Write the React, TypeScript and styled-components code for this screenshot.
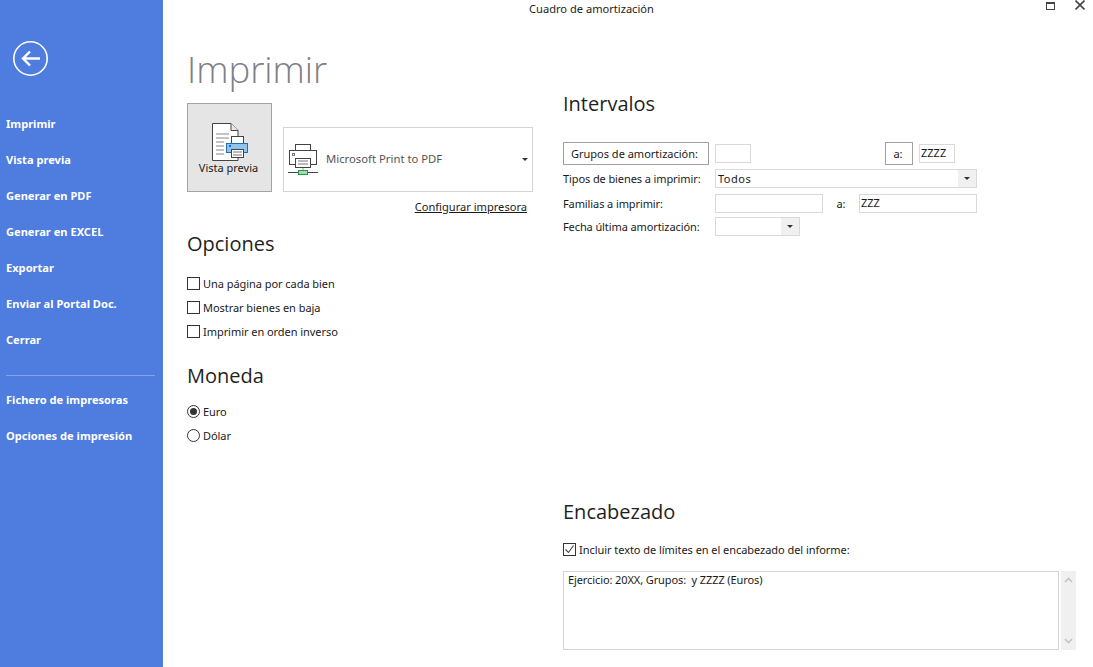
import React from "react";
import styled, { createGlobalStyle } from "styled-components";

const Global = createGlobalStyle`
  html, body { margin: 0; padding: 0; background: #fff; }
  body { font-family: "Noto Sans", "Open Sans", "Liberation Sans", sans-serif; color: #1a1a1a; }
  #root { width: 1093px; height: 667px; overflow: hidden; }
`;

const Page = styled.div`display: flex; width: 1093px; height: 667px; overflow: hidden;`;
const Side = styled.nav`width: 163px; flex: none; background: #4e7cdf; display: flex; flex-direction: column; padding: 41px 0 0 6px; box-sizing: border-box;`;
const BackIcon = styled.svg`display: block; margin: 0 0 29px 7px; flex: none;`;
const NavItem = styled.div`height: 36px; line-height: 36px; font-size: 11.1px; font-weight: 700; color: #fff; white-space: nowrap;`;
const NavRule = styled.div`width: 149px; height: 1px; background: #84a3e8; margin: 17px 0 6px 0;`;

const Main = styled.main`flex: 1; display: flex; flex-direction: column; min-width: 0;`;
const TitleBar = styled.header`height: 18px; flex: none; position: relative; text-align: center; font-size: 11.1px; line-height: 18px; color: #222; padding-right: 73px;`;
const WinIcons = styled.div`position: absolute; right: 8px; top: 0; display: flex; gap: 20px; align-items: center; height: 10px;`;

const Body = styled.div`display: flex; padding-left: 24px; flex: 1;`;
const Left = styled.section`width: 346px; flex: none; display: flex; flex-direction: column;`;
const Right = styled.section`width: 513px; margin-left: 30px; flex: none; display: flex; flex-direction: column; padding-top: 73px;`;

const BigTitle = styled.h1`margin: 0 0 11px; font-family: "Open Sans", sans-serif; font-weight: 300; font-size: 36.5px; line-height: 46px; height: 46px; padding-top: 28px; color: #7f7f84;`;
const PrintRow = styled.div`display: flex; align-items: flex-end; gap: 11px;`;
const Preview = styled.button`width: 85px; height: 89px; box-sizing: border-box; background: #e5e5e5; border: 1px solid #a3a3a3; padding: 19px 2px 0 0; display: flex; flex-direction: column; align-items: center; font: inherit; font-size: 11px; letter-spacing: 0; color: #1a1a1a; line-height: 14px;`;
const PreviewSvg = styled.svg`display: block; margin: 0 -2px -1px 0; flex: none;`;
const PrinterBox = styled.div`width: 250px; height: 65px; box-sizing: border-box; border: 1px solid #d4d4d4; display: flex; align-items: center; padding-left: 4px; position: relative; font-size: 11.3px; color: #555;`;
const PrinterName = styled.span`margin: -2px 0 0 7px;`;
const Caret = styled.span`width: 0; height: 0; border-left: 3px solid transparent; border-right: 3px solid transparent; border-top: 3px solid #333; display: block;`;
const PrinterCaret = styled(Caret)`position: absolute; right: 4px; top: 30px;`;
const ConfigLink = styled.a`align-self: flex-end; margin: 8px 6px 0 0; font-size: 11.1px; line-height: 14px; color: #1a1a1a; text-decoration: underline;`;

const Heading = styled.h2`margin: 0; font-family: "Open Sans", sans-serif; font-weight: 400; font-size: 20px; line-height: 26px; color: #1f1f1f;`;
const OptionsHead = styled(Heading)`margin-top: 17px; margin-bottom: 14px;`;
const MoneyHead = styled(Heading)`margin-top: 20px; margin-bottom: 10px;`;
const OptList = styled.div`display: flex; flex-direction: column;`;
const Opt = styled.label`height: 24px; display: flex; align-items: center; gap: 3px; font-size: 11px; letter-spacing: -.05px; color: #1a1a1a; white-space: nowrap;`;
const Box = styled.span`width: 13px; height: 13px; box-sizing: border-box; border: 1px solid #333; flex: none; display: flex; align-items: center; justify-content: center;`;
const Radio = styled.span`width: 13px; height: 13px; box-sizing: border-box; border: 1px solid #333; border-radius: 50%; flex: none; display: flex; align-items: center; justify-content: center;`;
const Dot = styled.span`width: 7px; height: 7px; background: #333; border-radius: 50%;`;

const IntervalHead = styled(Heading)`margin-bottom: 25px;`;
const Row = styled.div<{ $h: number }>`display: flex; align-items: center; height: ${p => p.$h}px; font-size: 11px; white-space: nowrap;`;
const LabelBtn = styled.div<{ $w: number; $ml?: number; $pr?: number }>`width: ${p => p.$w}px; height: 23px; margin-left: ${p => p.$ml || 0}px; padding-right: ${p => p.$pr || 0}px; box-sizing: border-box; border: 1px solid #a0a0a0; display: flex; align-items: center; justify-content: center; flex: none;`;
const Label = styled.span`width: 152px; flex: none; letter-spacing: -.1px;`;
const Field = styled.div<{ $w: number; $ml?: number }>`width: ${p => p.$w}px; height: 19px; margin-left: ${p => p.$ml || 0}px; box-sizing: border-box; border: 1px solid #d9d9d9; padding: 0 1px; line-height: 15px; flex: none; font-size: 11px;`;
const Select = styled.div<{ $w: number }>`width: ${p => p.$w}px; height: 19px; box-sizing: border-box; border: 1px solid #d9d9d9; display: flex; align-items: center; justify-content: space-between; padding-left: 2px; flex: none; letter-spacing: .5px;`;
const SelectBtn = styled.span`width: 18px; height: 100%; background: #f0f0f0; display: flex; align-items: center; justify-content: center;`;
const ToLabel = styled.span<{ $w: number }>`width: ${p => p.$w}px; flex: none; text-align: center;`;

const EncHead = styled(Heading)`margin-top: 261px; margin-bottom: 16px;`;
const CheckRow = styled(Opt)`height: 16px;`;
const AreaRow = styled.div`display: flex; margin-top: 14px; gap: 2px;`;
const Area = styled.div`width: 496px; height: 79px; box-sizing: border-box; border: 1px solid #d4d4d4; padding: 1px 4px; font-size: 11px; letter-spacing: -.1px; line-height: 14px; white-space: pre;`;
const Scroll = styled.div`width: 15px; height: 79px; background: #f0f0f0; display: flex; flex-direction: column; justify-content: space-between; align-items: center; padding: 6px 0; box-sizing: border-box;`;

const navTop = ["Imprimir", "Vista previa", "Generar en PDF", "Generar en EXCEL", "Exportar", "Enviar al Portal Doc.", "Cerrar"];
const navBottom = ["Fichero de impresoras", "Opciones de impresión"];

const PreviewIcon = () => (
  <PreviewSvg width="36" height="39" viewBox="0 0 36 39" fill="none">
    <path d="M.5 .5H19L26 7.5V37.5H.5Z" fill="#fff" stroke="#444" />
    <path d="M19 .5V7.5H26" fill="#e8e8e8" stroke="#444" />
    <path d="M4 11h13M4 15h13M4 19h8M4 23h8M4 27h8M4 31h8" stroke="#888" />
    <rect x="19.5" y="13.5" width="12" height="8" fill="#fff" stroke="#444" />
    <rect x="14.5" y="20.5" width="21" height="9" fill="#8fc4ee" stroke="#1f6db4" />
    <rect x="17" y="22" width="2" height="2" fill="#1f6db4" />
    <rect x="19.5" y="26.5" width="12" height="8" fill="#fff" stroke="#444" />
    <path d="M21 29h9M21 32h9" stroke="#777" />
  </PreviewSvg>
);

const PrinterIcon = () => (
  <svg width="31" height="31" viewBox="0 0 31 31" fill="none">
    <rect x="7.5" y=".5" width="15" height="6" fill="#fff" stroke="#444" />
    <rect x="1.5" y="6.5" width="27" height="14" fill="#fff" stroke="#444" />
    <rect x="4.5" y="9.5" width="2" height="2" stroke="#777" />
    <rect x="7.5" y="14.5" width="15" height="9" fill="#fff" stroke="#444" />
    <path d="M10 17h10M10 20h10" stroke="#777" />
    <path d="M15 24v3" stroke="#999" />
    <path d="M0 28.5h30" stroke="#444" />
    <rect x="10.5" y="26.5" width="9" height="4" fill="#a8d8b0" stroke="#1f9a4a" />
  </svg>
);

export default function App() {
  return (
    <Page>
      <Global />
      <Side>
        <BackIcon width="36" height="36" viewBox="0 0 36 36" fill="none">
          <circle cx="17.5" cy="17.5" r="16.7" stroke="#fff" strokeWidth="1.6" />
          <path d="M27 17.5H10M17 10.5l-7 7 7 7" stroke="#fff" strokeWidth="2.4" />
        </BackIcon>
        {navTop.map(t => <NavItem key={t}>{t}</NavItem>)}
        <NavRule />
        {navBottom.map(t => <NavItem key={t}>{t}</NavItem>)}
      </Side>
      <Main>
        <TitleBar>
          Cuadro de amortización
          <WinIcons>
            <svg width="9" height="9" viewBox="0 0 9 9" fill="none">
              <rect x=".5" y="1.5" width="8" height="7" stroke="#444" />
              <rect x="0" y="1" width="9" height="2" fill="#444" />
            </svg>
            <svg width="10" height="10" viewBox="0 0 10 10" fill="none">
              <path d="M.5.5l9 9M9.5.5l-9 9" stroke="#444" strokeWidth="1.6" />
            </svg>
          </WinIcons>
        </TitleBar>
        <Body>
          <Left>
            <BigTitle>Imprimir</BigTitle>
            <PrintRow>
              <Preview>
                <PreviewIcon />
                <span>Vista previa</span>
              </Preview>
              <PrinterBox>
                <PrinterIcon />
                <PrinterName>Microsoft Print to PDF</PrinterName>
                <PrinterCaret />
              </PrinterBox>
            </PrintRow>
            <ConfigLink>Configurar impresora</ConfigLink>
            <OptionsHead>Opciones</OptionsHead>
            <OptList>
              <Opt><Box />Una página por cada bien</Opt>
              <Opt><Box />Mostrar bienes en baja</Opt>
              <Opt><Box />Imprimir en orden inverso</Opt>
            </OptList>
            <MoneyHead>Moneda</MoneyHead>
            <OptList>
              <Opt><Radio><Dot /></Radio>Euro</Opt>
              <Opt><Radio />Dólar</Opt>
            </OptList>
          </Left>
          <Right>
            <IntervalHead>Intervalos</IntervalHead>
            <Row $h={23}>
              <LabelBtn $w={146} $pr={3}>Grupos de amortización:</LabelBtn>
              <Field $w={36} $ml={6} />
              <LabelBtn $w={28} $ml={134} $pr={2}>a:</LabelBtn>
              <Field $w={36} $ml={6}>ZZZZ</Field>
            </Row>
            <Row $h={26}>
              <Label>Tipos de bienes a imprimir:</Label>
              <Select $w={262}>Todos<SelectBtn><Caret /></SelectBtn></Select>
            </Row>
            <Row $h={24}>
              <Label>Familias a imprimir:</Label>
              <Field $w={108} />
              <ToLabel $w={36}>a:</ToLabel>
              <Field $w={118}>ZZZ</Field>
            </Row>
            <Row $h={23}>
              <Label>Fecha última amortización:</Label>
              <Select $w={85}><span /><SelectBtn><Caret /></SelectBtn></Select>
            </Row>
            <EncHead>Encabezado</EncHead>
            <CheckRow>
              <Box>
                <svg width="11" height="11" viewBox="0 0 11 11" fill="none"><path d="M1.5 5.5l3 3 5-7" stroke="#444" strokeWidth="1.1" /></svg>
              </Box>
              Incluir texto de límites en el encabezado del informe:
            </CheckRow>
            <AreaRow>
              <Area>Ejercicio: 20XX, Grupos:  y ZZZZ (Euros)</Area>
              <Scroll>
                <svg width="9" height="6" viewBox="0 0 9 6" fill="none"><path d="M1 5l3.5-3.5L8 5" stroke="#c4c4c4" strokeWidth="1.6" /></svg>
                <svg width="9" height="6" viewBox="0 0 9 6" fill="none"><path d="M1 1l3.5 3.5L8 1" stroke="#c4c4c4" strokeWidth="1.6" /></svg>
              </Scroll>
            </AreaRow>
          </Right>
        </Body>
      </Main>
    </Page>
  );
}
